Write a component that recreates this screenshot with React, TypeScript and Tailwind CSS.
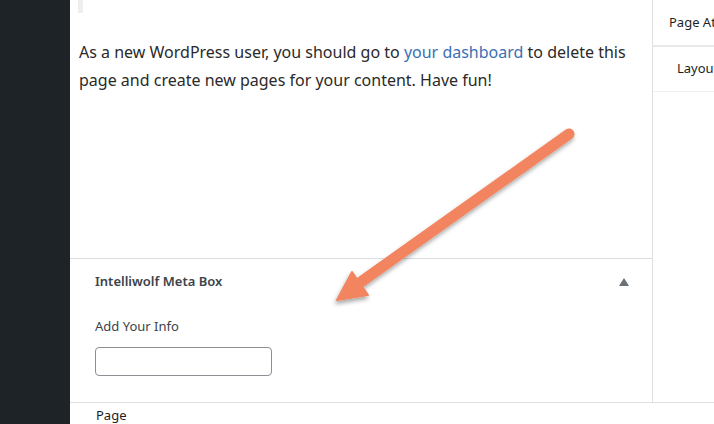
import React from 'react';

const font = { fontFamily: '"Noto Sans", "Open Sans", sans-serif' };

const Arrow: React.FC = () => (
  <svg className="pointer-events-none absolute left-0 top-0" width="714" height="424" viewBox="0 0 714 424">
    <defs>
      <filter id="shadow" x="-20%" y="-20%" width="140%" height="140%">
        <feDropShadow dx="-1" dy="3" stdDeviation="2" floodColor="#000" floodOpacity="0.35" />
      </filter>
    </defs>
    <g filter="url(#shadow)" fill="#f2855f" stroke="#f2855f">
      <line x1="569" y1="134" x2="358" y2="284" strokeWidth="11" strokeLinecap="round" />
      <polygon points="337,300 352,272 368,295" strokeWidth="2" strokeLinejoin="round" />
    </g>
  </svg>
);

const App: React.FC = () => {
  return (
    <div className="relative flex h-[424px] w-[714px] overflow-hidden bg-white text-[#1e1e1e]" style={font}>
      {/* admin sidebar */}
      <div className="w-[70px] shrink-0 bg-[#1d2327]" />

      <div className="flex flex-1 flex-col">
        <div className="flex flex-1">
          {/* editor canvas */}
          <div className="flex w-[583px] flex-col border-r border-[#e0e0e0]">
            <div className="h-[258px] pl-[8px]">
              <div className="h-[13px] w-[5px] bg-[#eeeeee]" />
              <p className="mt-[25px] pl-[1px] pr-4 text-[16px] leading-[28px] text-[#2a2a2a]">
                As a new WordPress user, you should go to{' '}
                <a className="text-[#3a6fb5]">your dashboard</a> to delete this page and create new pages for your
                content. Have fun!
              </p>
            </div>

            {/* meta box */}
            <div className="flex-1 border-t border-[#dcdcde] px-[25px]">
              <div className="flex h-[46px] items-center justify-between">
                <span className="text-[13px] font-semibold text-[#3c434a]">Intelliwolf Meta Box</span>
                <svg width="10" height="8" viewBox="0 0 10 8" className="mr-[-2px]">
                  <polygon points="5,0 10,8 0,8" fill="#6b7075" />
                </svg>
              </div>
              <div className="mt-[12px] text-[13px] text-[#3c434a]">Add Your Info</div>
              <input
                type="text"
                className="mt-[10px] h-[29px] w-[177px] rounded-[4px] border border-[#8c8f94] bg-white px-2 text-[14px] outline-none"
              />
            </div>
          </div>

          {/* settings sidebar */}
          <div className="flex-1 overflow-hidden">
            <div className="flex h-[47px] items-center border-b-2 border-[#e8e8e8] pl-[16px] text-[13px] whitespace-nowrap">
              Page Attributes
            </div>
            <div className="flex h-[45px] items-center border-b border-[#f0f0f0] pl-[24px] text-[13px] whitespace-nowrap">
              Layout
            </div>
          </div>
        </div>

        {/* footer bar */}
        <div className="flex h-[22px] items-center border-t border-[#e0e0e0] pl-[26px] pt-[4px] text-[13px]">Page</div>
      </div>

      <Arrow />
    </div>
  );
};

export default App;
